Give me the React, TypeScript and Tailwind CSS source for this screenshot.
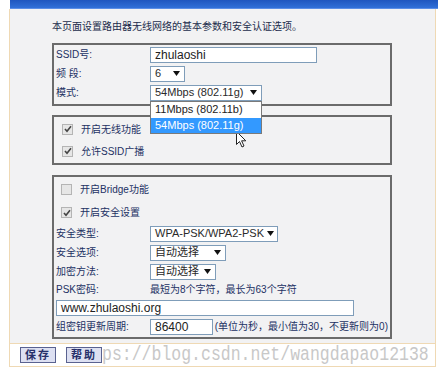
import React from 'react';

function Arrow() {
  return (
    <svg width="7" height="5" viewBox="0 0 7 5" className="shrink-0">
      <path d="M0 0 H7 L3.5 5 Z" fill="#111" />
    </svg>
  );
}

function Select({ value, w, children }: { value: string; w: string; children?: React.ReactNode }) {
  return (
    <div className={`relative flex h-[16px] items-center justify-between gap-[3px] border border-[#7f9db9] bg-white pl-[4px] pr-[4px] ${w}`}>
      <span className="whitespace-nowrap text-[11px] leading-none text-[#2a2a2a]">{value}</span>
      <Arrow />
      {children}
    </div>
  );
}

function Check({ on }: { on: boolean }) {
  return (
    <span className="flex h-[11px] w-[11px] shrink-0 items-center justify-center border border-[#b4b4b4] bg-[#e6e6e6]">
      {on ? (
        <svg width="8" height="8" viewBox="0 0 8 8">
          <path d="M1 4 L3 6.3 L7 1.2" fill="none" stroke="#444" strokeWidth="1.6" />
        </svg>
      ) : null}
    </span>
  );
}

function Row({ label, h, children }: { label: string; h: string; children: React.ReactNode }) {
  return (
    <div className={`flex items-center ${h}`}>
      <span className="w-[94px] shrink-0 whitespace-nowrap">{label}</span>
      {children}
    </div>
  );
}

export default function App() {
  return (
    <div className="relative h-[372px] w-[438px] overflow-hidden bg-white font-['Liberation_Sans','Noto_Sans_CJK_SC',sans-serif] text-[10px] text-[#233163]">
      {/* title bar */}
      <div className="ml-[10px] h-[9px] border-b border-[#5b8ee6] bg-gradient-to-b from-[#1f56bf] to-[#3170d8]" />

      {/* main panel */}
      <div className="ml-[9px] mr-[2px] h-[334px] border-l border-r border-[#efd9b4] bg-[#f2f2f3] pl-[42px] pt-[10px]">
        <p className="h-[24px] leading-[16px] text-[#222c4c]">本页面设置路由器无线网络的基本参数和安全认证选项。</p>

        {/* box 1 */}
        <div className="w-[340px] border-2 border-[#6b6b6b] px-[2px] pb-[2px]">
          <Row label="SSID号:" h="h-[19px]">
            <div className="flex h-[16px] w-[167px] items-center border border-[#7f9db9] bg-white pl-[4px] text-[12px] text-[#222]">zhulaoshi</div>
          </Row>
          <Row label="频 段:" h="h-[19px]">
            <Select value="6" w="w-[35px]" />
          </Row>
          <Row label="模式:" h="h-[19px]">
            <Select value="54Mbps (802.11g)" w="w-[112px]">
              <div className="absolute left-[-1px] top-[15px] z-10 w-[112px] border border-[#7a7a7a] bg-white text-[11px] text-[#222]">
                <div className="flex h-[16px] items-center pl-[4px]">11Mbps (802.11b)</div>
                <div className="flex h-[15px] items-center bg-[#3399ff] pl-[4px] text-white">54Mbps (802.11g)</div>
              </div>
            </Select>
          </Row>
        </div>

        {/* box 2 */}
        <div className="mt-[9px] flex w-[340px] flex-col border-2 border-[#6b6b6b] pb-[1px] pl-[8px] pt-[1px]">
          <div className="flex h-[22px] items-center gap-[8px]">
            <Check on />
            <span>开启无线功能</span>
          </div>
          <div className="flex h-[22px] items-center gap-[8px]">
            <Check on />
            <span>允许SSID广播</span>
          </div>
        </div>

        {/* box 3 */}
        <div className="mt-[10px] w-[340px] border-2 border-[#6b6b6b] px-[2px] pb-[1px]">
          <div className="flex h-[24px] items-center gap-[8px] pl-[5px]">
            <Check on={false} />
            <span>开启Bridge功能</span>
          </div>
          <div className="flex h-[23px] items-center gap-[8px] pl-[5px]">
            <Check on />
            <span>开启安全设置</span>
          </div>
          <Row label="安全类型:" h="h-[19px]">
            <Select value="WPA-PSK/WPA2-PSK" w="w-[128px]" />
          </Row>
          <Row label="安全选项:" h="h-[19px]">
            <Select value="自动选择" w="w-[76px]" />
          </Row>
          <Row label="加密方法:" h="h-[19px]">
            <Select value="自动选择" w="w-[66px]" />
          </Row>
          <Row label="PSK密码:" h="h-[17px]">
            <span className="whitespace-nowrap">最短为8个字符，最长为63个字符</span>
          </Row>
          <div className="flex h-[19px] items-center">
            <div className="flex h-[16px] w-[298px] items-center border border-[#7f9db9] bg-white pl-[4px] text-[12px] text-[#222]">www.zhulaoshi.org</div>
          </div>
          <Row label="组密钥更新周期:" h="h-[19px]">
            <div className="flex h-[16px] w-[69px] items-center border border-[#7f9db9] bg-white pl-[4px] text-[12px] text-[#222]">86400</div>
            <span className="ml-[2px] whitespace-nowrap">(单位为秒，最小值为30，不更新则为0)</span>
          </Row>
        </div>
      </div>

      {/* watermark */}
      <div className="absolute left-[102px] top-[343px] origin-top scale-y-[1.2] whitespace-nowrap font-['Liberation_Mono',monospace] text-[16.5px] leading-[20px] text-[#c8c8c8]">
        ps://blog.csdn.net/wangdapao12138
      </div>

      {/* save row */}
      <div className="relative ml-[9px] mr-[2px] flex h-[24px] items-center gap-[10px] border border-[#efd9b4] pl-[10px]">
        <button className="flex h-[16px] w-[36px] items-center justify-center border border-[#5a6290] bg-[#dde0f2] text-[11px] font-bold tracking-[2px] text-[#27306a]">保存</button>
        <button className="flex h-[16px] w-[36px] items-center justify-center border border-[#5a6290] bg-[#dde0f2] text-[11px] font-bold tracking-[2px] text-[#27306a]">帮助</button>
      </div>

      {/* mouse cursor */}
      <svg className="absolute left-[236px] top-[131px]" width="11" height="17" viewBox="0 0 11 17">
        <path d="M0.5 0.5 V13.5 L3.5 10.5 L6 16 L8 15 L5.6 9.8 L9.8 9.8 Z" fill="#fff" stroke="#222" strokeWidth="1" />
      </svg>
    </div>
  );
}
